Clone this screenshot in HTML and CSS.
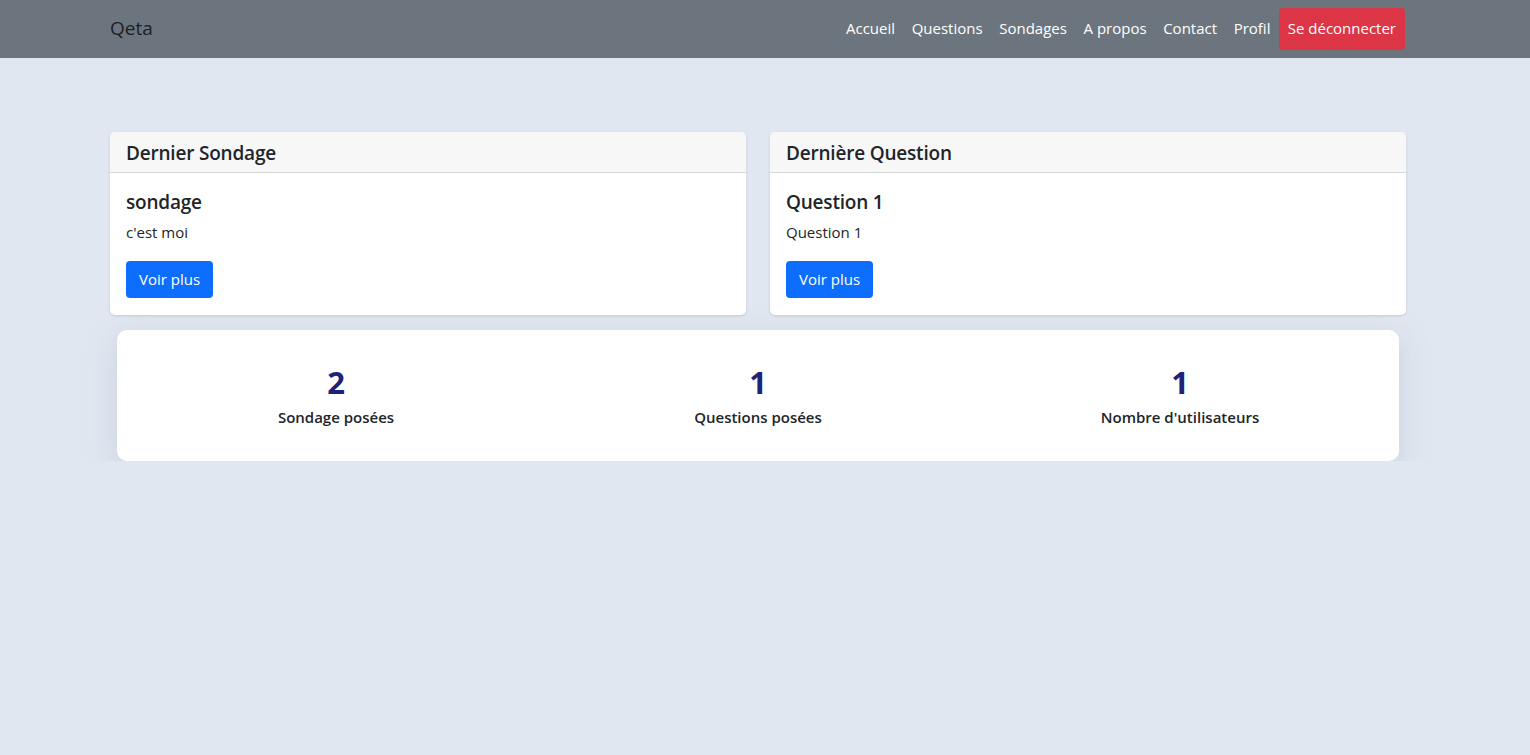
FILE: index.html
```html
<!DOCTYPE html>
<html lang="fr">
<head>
<meta charset="utf-8">
<title>Qeta</title>
<link rel="stylesheet" href="styles.css">
</head>
<body>
<nav class="navbar">
  <div class="container nav-inner">
    <a class="brand" href="#">Qeta</a>
    <ul class="nav-links">
      <li><a href="#">Accueil</a></li>
      <li><a href="#">Questions</a></li>
      <li><a href="#">Sondages</a></li>
      <li><a href="#">A propos</a></li>
      <li><a href="#">Contact</a></li>
      <li><a href="#">Profil</a></li>
      <li><a class="btn-logout" href="#">Se déconnecter</a></li>
    </ul>
  </div>
</nav>
<main class="container main">
  <div class="cards">
    <div class="card">
      <div class="card-header"><h5>Dernier Sondage</h5></div>
      <div class="card-body">
        <h5 class="card-title">sondage</h5>
        <p class="card-text">c'est moi</p>
        <a class="btn-primary" href="#">Voir plus</a>
      </div>
    </div>
    <div class="card">
      <div class="card-header"><h5>Dernière Question</h5></div>
      <div class="card-body">
        <h5 class="card-title">Question 1</h5>
        <p class="card-text">Question 1</p>
        <a class="btn-primary" href="#">Voir plus</a>
      </div>
    </div>
  </div>
  <div class="stats">
    <div class="stat"><div class="stat-num">2</div><div class="stat-label">Sondage posées</div></div>
    <div class="stat"><div class="stat-num">1</div><div class="stat-label">Questions posées</div></div>
    <div class="stat"><div class="stat-num">1</div><div class="stat-label">Nombre d'utilisateurs</div></div>
  </div>
</main>
</body>
</html>
```
FILE: styles.css
```css
* { box-sizing: border-box; }
html, body { margin: 0; padding: 0; }
body {
  background: #e0e7f0;
  font-family: "Open Sans", "Noto Sans", sans-serif;
  font-size: 16px;
  line-height: 1.5;
  color: #212529;
}
a { text-decoration: none; }
.container { width: 1296px; margin-left: 110px; }
.navbar { background: #6c757d; height: 58px; }
.nav-inner { display: flex; align-items: center; justify-content: space-between; height: 58px; }
.brand { font-size: 19px; color: #1c1f23; margin-top: -1px; }
.nav-links { display: flex; align-items: center; list-style: none; margin: 0; padding: 0; }
.nav-links a { display: block; color: #fff; font-size: 15px; padding: 7px 8.3px 9px; }
.nav-links a.btn-logout {
  background: #dc3545; border-radius: 4px; padding: 9px 9px 10px; margin-right: 1px;
}
.main { padding-top: 74px; }
.cards { display: grid; grid-template-columns: 1fr 1fr; gap: 24px; }
.card {
  background: #fff; border-radius: 5px; overflow: hidden;
  box-shadow: 0 1px 3px rgba(0,0,0,.12);
}
.card-header {
  background: #f7f7f7; border-bottom: 1px solid #d6d7d9; padding: 9px 16px 6px; height: 41px;
}
.card-header h5, .card-title { margin: 0; font-size: 19px; font-weight: 600; line-height: 24px; letter-spacing: -0.2px; }
.card-body { padding: 17px 16px 17px; }
.card-title { margin-bottom: 6px; }
.card-text { margin: 0 0 17px; font-size: 15px; line-height: 24px; }
.btn-primary {
  display: inline-block; background: #0d6efd; color: #fff; border-radius: 4px;
  padding: 6px 13px 7px; font-size: 15px; line-height: 24px;
}
.stats {
  margin: 15px 7px 0; background: #fff; border-radius: 10px; height: 131px;
  padding: 0 8px; display: grid; grid-template-columns: 1fr 1fr 1fr; align-items: center;
  box-shadow: 0 8px 28px rgba(160,172,195,.35);
}
.stat { text-align: center; padding-bottom: 1px; }
.stat-num { font-size: 31px; font-weight: 700; color: #20217a; line-height: 38px; }
.stat-label { font-size: 15px; font-weight: 600; line-height: 20px; margin-top: 6px; }
```
